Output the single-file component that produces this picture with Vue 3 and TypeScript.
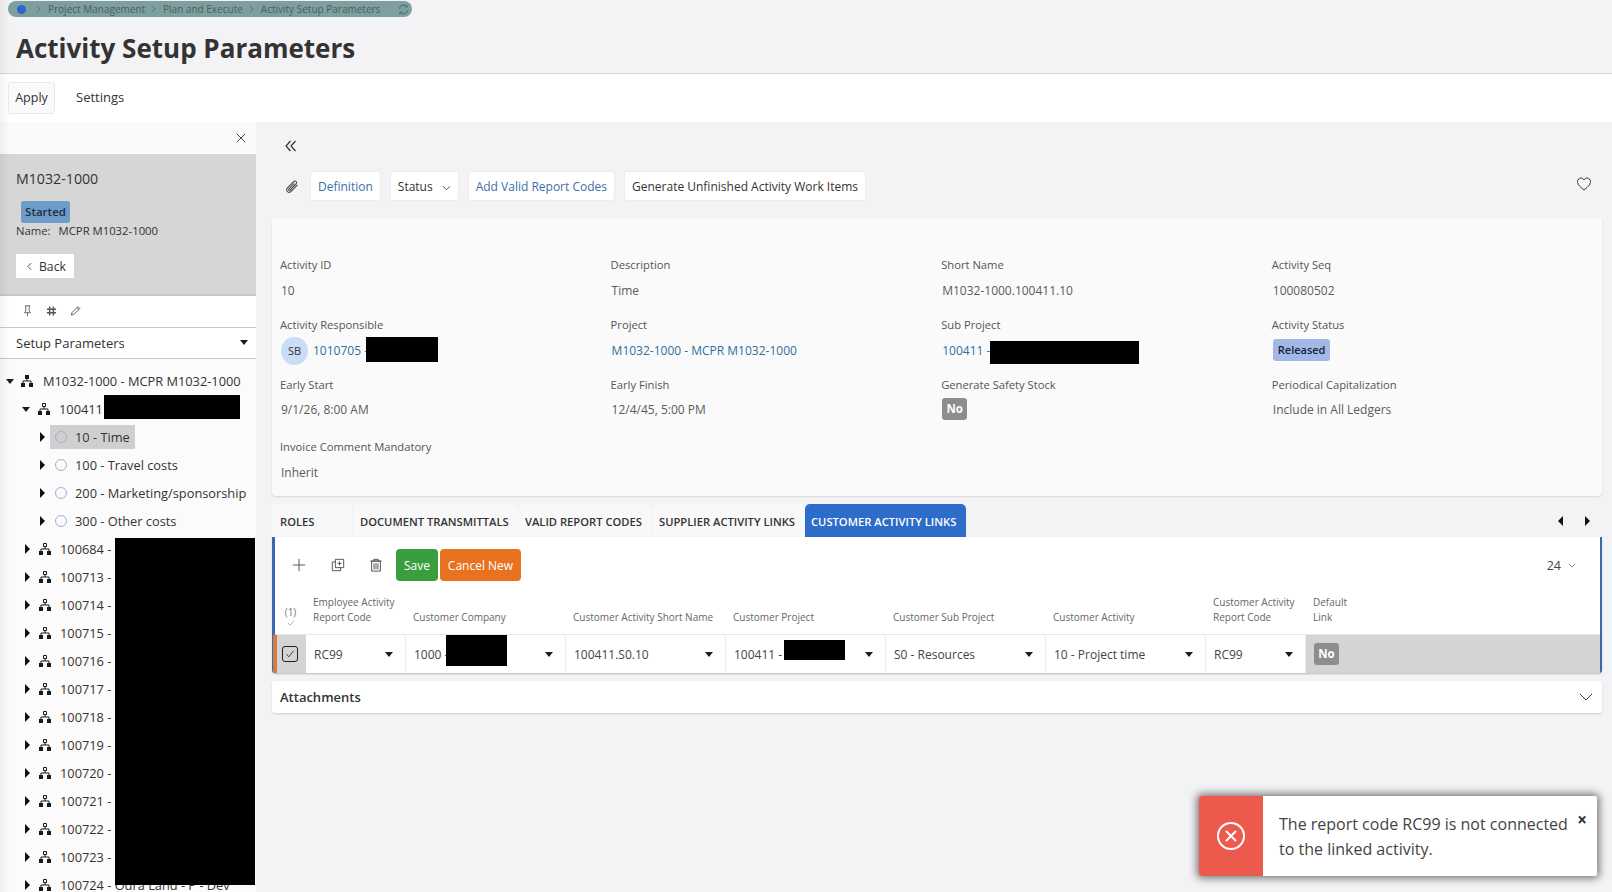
<script setup lang="ts">
interface Field { label: string; value?: string; kind?: string; redact?: number; }
const fields: Field[] = [
  { label: 'Activity ID', value: '10' },
  { label: 'Description', value: 'Time' },
  { label: 'Short Name', value: 'M1032-1000.100411.10' },
  { label: 'Activity Seq', value: '100080502' },
  { label: 'Activity Responsible', value: '1010705 -', kind: 'person' },
  { label: 'Project', value: 'M1032-1000 - MCPR M1032-1000', kind: 'link' },
  { label: 'Sub Project', value: '100411 -', kind: 'sub' },
  { label: 'Activity Status', value: 'Released', kind: 'released' },
  { label: 'Early Start', value: '9/1/26, 8:00 AM' },
  { label: 'Early Finish', value: '12/4/45, 5:00 PM' },
  { label: 'Generate Safety Stock', value: 'No', kind: 'no' },
  { label: 'Periodical Capitalization', value: 'Include in All Ledgers' },
  { label: 'Invoice Comment Mandatory', value: 'Inherit' },
];
const subRows = ['10 - Time', '100 - Travel costs', '200 - Marketing/sponsorship', '300 - Other costs'];
const projects = ['100684 -', '100713 -', '100714 -', '100715 -', '100716 -', '100717 -', '100718 -', '100719 -', '100720 -', '100721 -', '100722 -', '100723 -', '100724 - Oura Land - P - Dev'];
const tabs = [
  { t: 'ROLES', w: 80 }, { t: 'DOCUMENT TRANSMITTALS', w: 164 }, { t: 'VALID REPORT CODES', w: 133 },
  { t: 'SUPPLIER ACTIVITY LINKS', w: 152 }, { t: 'CUSTOMER ACTIVITY LINKS', w: 161, active: true },
];
const headers = [
  ['Employee Activity', 'Report Code'], ['Customer Company'], ['Customer Activity Short Name'], ['Customer Project'],
  ['Customer Sub Project'], ['Customer Activity'], ['Customer Activity', 'Report Code'], ['Default', 'Link'],
];
const cells = [
  { v: 'RC99' }, { v: '1000 -', r: 'r-company' }, { v: '100411.S0.10' }, { v: '100411 -', r: 'r-project' },
  { v: 'S0 - Resources' }, { v: '10 - Project time' }, { v: 'RC99' },
];
</script>

<template>
  <div class="page">
    <header class="head">
      <nav class="crumbs">
        <span class="dot"></span>
        <svg class="chev" viewBox="0 0 6 10"><path d="M1 1l4 4-4 4" /></svg>
        <span>Project Management</span>
        <svg class="chev" viewBox="0 0 6 10"><path d="M1 1l4 4-4 4" /></svg>
        <span>Plan and Execute</span>
        <svg class="chev" viewBox="0 0 6 10"><path d="M1 1l4 4-4 4" /></svg>
        <span>Activity Setup Parameters</span>
        <svg class="refresh" viewBox="0 0 12 12"><path d="M1.500 5A4.600 4.600 0 0 1 9.700 3M10.500 7A4.600 4.600 0 0 1 2.300 9M8 3.200h2V1.200M4 8.800H2v2" /></svg>
      </nav>
      <h1>Activity Setup Parameters</h1>
    </header>
    <div class="cmdbar">
      <button class="apply">Apply</button>
      <span class="settings">Settings</span>
    </div>

    <div class="body">
      <aside class="side">
        <div class="closerow">
          <svg class="x" viewBox="0 0 12 12"><path d="M1 1l10 10M11 1L1 11" /></svg>
        </div>
        <div class="summary">
          <div class="sumtitle">M1032-1000</div>
          <span class="started">Started</span>
          <div class="name"><span>Name:</span><span>MCPR M1032-1000</span></div>
          <button class="back">
            <svg viewBox="0 0 6 10"><path d="M5 1L1 5l4 4" /></svg>Back
          </button>
        </div>
        <div class="sidetools">
          <svg viewBox="0 0 12 14"><path d="M3 1h6M4 1v6L2.500 9h7L8 7V1M6 9v4" /></svg>
          <svg viewBox="0 0 12 12"><path d="M4 1v10M8 1v10M1 4h10M1 8h10" stroke-width="1.600" /></svg>
          <svg viewBox="0 0 12 12"><path d="M1.500 10.500l.7-2.700L8.700 1.300l2 2-6.500 6.500zM7.700 2.300l2 2" /></svg>
        </div>
        <div class="selectrow">
          <span>Setup Parameters</span><i class="caret"></i>
        </div>
        <div class="tree">
          <div class="row l0">
            <i class="caret tw"></i>
            <svg class="hier" viewBox="0 0 12 12"><path class="solid" d="M4 0h4v4H4zM0 8h4v4H0zM8 8h4v4H8z" /><path d="M6 4v2M2 8V6h8v2" /></svg>
            <span>M1032-1000 - MCPR M1032-1000</span>
          </div>
          <div class="row l1">
            <i class="caret tw"></i>
            <svg class="hier" viewBox="0 0 12 12"><path d="M4.500.5h3v3h-3z" /><path class="solid" d="M0 8h4v4H0zM8 8h4v4H8z" /><path d="M6 4v2M2 8V6h8v2" /></svg>
            <span>100411</span>
          </div>
          <div v-for="(s, i) in subRows" :key="s" class="row l2">
            <i class="caret tr"></i>
            <span class="leaf" :class="{ sel: i === 0 }"><i class="circle"></i><span>{{ s }}</span></span>
          </div>
          <div v-for="p in projects" :key="p" class="row l1">
            <i class="caret tr"></i>
            <svg class="hier" viewBox="0 0 12 12"><path d="M4.500.5h3v3h-3z" /><path class="solid" d="M0 8h4v4H0zM8 8h4v4H8z" /><path d="M6 4v2M2 8V6h8v2" /></svg>
            <span>{{ p }}</span>
          </div>
          <div class="mask mask-a"></div>
          <div class="mask mask-b"></div>
        </div>
      </aside>

      <main class="main">
        <div class="collapse">
          <svg viewBox="0 0 12 12"><path d="M5.500 1L1 6l4.500 5M10.500 1L6 6l4.500 5" /></svg>
        </div>
        <div class="actions">
          <span class="clip">
            <svg viewBox="0 0 16 16"><path d="M13.500 6.500L7.700 12.600c-1 1-2.500 1-3.500.2-1-.9-1-2.400 0-3.500l5.800-6c.7-.7 1.700-.7 2.300-.1.700.7.700 1.700 0 2.400L6.700 11.400c-.4.400-.9.400-1.200.1-.3-.3-.3-.8.100-1.200l5-5.200" /></svg>
          </span>
          <button class="act link">Definition</button>
          <button class="act status">Status
            <svg class="down" viewBox="0 0 10 6"><path d="M1 1l4 4 4-4" /></svg>
          </button>
          <button class="act link">Add Valid Report Codes</button>
          <button class="act">Generate Unfinished Activity Work Items</button>
          <svg class="heart" viewBox="0 0 16 16"><path d="M8 14C3 10 1.500 8 1.500 5.500 1.500 3.500 3 2 4.800 2 6.200 2 7.300 2.800 8 4c.7-1.200 1.800-2 3.200-2 1.800 0 3.300 1.500 3.300 3.500C14.500 8 13 10 8 14z" /></svg>
        </div>

        <section class="card">
          <div v-for="f in fields" :key="f.label" class="field">
            <label>{{ f.label }}</label>
            <div class="val">
              <template v-if="f.kind === 'person'">
                <span class="avatar">SB</span><span class="lnk">{{ f.value }}</span><span class="block b-person"></span>
              </template>
              <template v-else-if="f.kind === 'sub'">
                <span class="lnk">{{ f.value }}</span><span class="block b-sub"></span>
              </template>
              <span v-else-if="f.kind === 'link'" class="lnk">{{ f.value }}</span>
              <span v-else-if="f.kind === 'released'" class="released">{{ f.value }}</span>
              <span v-else-if="f.kind === 'no'" class="nobadge up">{{ f.value }}</span>
              <span v-else>{{ f.value }}</span>
            </div>
          </div>
        </section>

        <div class="tabs">
          <span v-for="t in tabs" :key="t.t" class="tab" :class="{ active: t.active }" :style="{ width: t.w + 'px' }">{{ t.t }}</span>
          <span class="tabnav">
            <i class="caret tl"></i><i class="caret tr"></i>
          </span>
        </div>
        <section class="panel">
          <div class="ptools">
            <svg class="ticon" viewBox="0 0 16 16"><path d="M8 1v14M1 8h14" /></svg>
            <svg class="ticon" viewBox="0 0 16 16"><path d="M5 1.500h9.500V11H5zM5 4.500H1.500V14.500H11V11M9.700 4v4.500M7.500 6.200H12" /></svg>
            <svg class="ticon" viewBox="0 0 16 16"><path d="M1.500 3.500h13M5.500 3.500V1.500h5v2M3 3.500h10V15H3zM5.800 6v7M8 6v7M10.200 6v7" /></svg>
            <button class="save">Save</button>
            <button class="cancel">Cancel New</button>
            <span class="pagesize">24
              <svg viewBox="0 0 10 6"><path d="M1 1l4 4 4-4" /></svg>
            </span>
          </div>
          <div class="grid thead">
            <div class="cnt"><span>(1)</span>
              <svg viewBox="0 0 10 8"><path d="M1 4l3 3 5-6" /></svg>
            </div>
            <div v-for="(h, i) in headers" :key="i" class="th">
              <span v-for="l in h" :key="l">{{ l }}</span>
            </div>
          </div>
          <div class="grid tbody">
            <div class="selcell">
              <span class="check"><svg viewBox="0 0 12 10"><path d="M1.500 5l3 3.500L10.500 1" /></svg></span>
            </div>
            <div v-for="(c, i) in cells" :key="i" class="td">
              <span>{{ c.v }}</span><i class="caret"></i>
              <span v-if="c.r" class="cellmask" :class="c.r"></span>
            </div>
            <div class="lastcell"><span class="nobadge">No</span></div>
          </div>
        </section>
        <section class="attach">
          <span>Attachments</span>
          <svg viewBox="0 0 14 8"><path d="M1 1l6 6 6-6" /></svg>
        </section>
      </main>
    </div>

    <div class="toast">
      <div class="toastside">
        <svg viewBox="0 0 30 30"><circle cx="15" cy="15" r="13" /><path d="M10 10l10 10M20 10L10 20" /></svg>
      </div>
      <div class="toastmsg">The report code RC99 is not connected to the linked activity.</div>
      <span class="toastx">×</span>
    </div>
    <div class="edge"></div>
  </div>
</template>

<style scoped>
.page {
  position: relative; width: 1612px; height: 892px; overflow: hidden; background: #f3f2f5;
  font-family: "Open Sans", "Liberation Sans", sans-serif; font-size: 13px; color: #333;
  display: flex; flex-direction: column;
}
button { font-family: inherit; cursor: default; }
svg { fill: none; stroke: currentColor; display: block; flex: none; }
i { display: block; flex: none; }
.edge { position: absolute; left: 0; top: 0; bottom: 0; width: 9px; background: linear-gradient(to right, rgba(0,0,0,.05), rgba(0,0,0,0)); pointer-events: none; }
.head { height: 74px; flex: none; box-sizing: border-box; padding: 1px 0 0 8px; border-bottom: 1px solid #d6d6d6; }
.crumbs {
  width: 404px; height: 16px; box-sizing: border-box; border-radius: 8px; background: #7d9f9f; color: #47615f;
  display: flex; align-items: center; padding-left: 9px; font-size: 10px; white-space: nowrap;
}
.dot { width: 9px; height: 9px; border-radius: 50%; background: #2d66cc; margin-right: 10px; }
.chev { width: 5px; height: 8px; stroke: #506c6a; margin-right: 7px; }
.crumbs span:not(.dot) { margin-right: 6px; }
.refresh { width: 11px; height: 11px; margin-left: 12px; stroke: #47615f; }
h1 { margin: 13px 0 0 8px; font-size: 26px; line-height: 36px; font-weight: 700; color: #333; }
.cmdbar { height: 48px; flex: none; background: #fff; display: flex; align-items: center; padding-left: 8px; font-size: 13px; }
.apply { width: 47px; height: 32px; padding: 0 0 2px; background: #fafafa; border: 1px solid #e8e8e8; border-radius: 3px; font-size: 12.500px; color: #333; }
.settings { margin: -2px 0 0 21px; }
.body { flex: 1; display: flex; min-height: 0; }

.side { width: 256px; flex: none; background: #fbfbfb; display: flex; flex-direction: column; overflow: hidden; }
.closerow { height: 32px; flex: none; background: #fafafa; display: flex; align-items: center; justify-content: flex-end; padding-right: 10px; }
.x { width: 10px; height: 10px; stroke: #222; }
.summary { height: 142px; flex: none; box-sizing: border-box; background: #d6d6d6; border-bottom: 2px solid #c6c6c6; padding: 15px 0 0 16px; }
.sumtitle { font-size: 14.200px; line-height: 20px; color: #333; }
.started { display: block; width: 49px; height: 22px; margin: 12px 0 0 5px; border-radius: 3px; background: #6d9cca; font-size: 11.500px; font-weight: 600; line-height: 22px; text-align: center; color: #1c2e40; }
.name { display: flex; gap: 8px; font-size: 11.300px; line-height: 16px; margin-top: 0; color: #333; }
.back { display: flex; align-items: center; gap: 7px; width: 58px; height: 24px; margin-top: 15px; padding: 0 0 0 11px; background: #fff; border: 0; font-size: 12.200px; color: #333; }
.back svg { width: 5px; height: 9px; stroke: #333; }
.sidetools { height: 31px; flex: none; box-sizing: content-box; background: #fff; display: flex; align-items: center; padding-left: 22px; gap: 13px; color: #555; border-bottom: 1px solid #c8c8c8; }
.sidetools svg { width: 11px; height: 12px; margin-top: -2px; }
.selectrow { height: 31px; flex: none; box-sizing: border-box; background: #fff; display: flex; align-items: center; justify-content: space-between; padding: 0 8px 1px 16px; font-size: 13px; border-bottom: 1px solid #c8c8c8; margin-bottom: 1px; }
.caret { width: 0; height: 0; border-left: 4.500px solid transparent; border-right: 4.500px solid transparent; border-top: 5px solid #1c1c1c; }
.caret.tr { border: 0; border-top: 5px solid transparent; border-bottom: 5px solid transparent; border-left: 5px solid #111; }
.caret.tl { border: 0; border-top: 5px solid transparent; border-bottom: 5px solid transparent; border-right: 5px solid #111; }
.tree { position: relative; padding-top: 7px; flex: 1; min-height: 0; }
.row { height: 28px; display: flex; align-items: center; white-space: nowrap; font-size: 12.800px; color: #333; }
.l0 { padding-left: 6px; }
.l1 { padding-left: 22px; }
.l2 { padding-left: 40px; }
.l0 .caret.tw { margin-right: 7px; }
.l1 .caret.tw { margin-right: 8px; }
.l1 .caret.tr { margin: 0 9px 0 3px; }
.l2 .caret.tr { margin-right: 5px; }
.hier { width: 12px; height: 12px; margin-right: 9px; color: #1a1a1a; }
.l0 .hier { margin-right: 10px; }
.hier .solid { fill: #1a1a1a; stroke: none; }
.leaf { height: 24px; display: flex; align-items: center; padding: 0 5px 0 5px; }
.leaf.sel { background: #cfcfcf; }
.circle { width: 10px; height: 10px; border-radius: 50%; border: 1px solid #9fb2d8; margin-right: 8px; }
.mask { position: absolute; background: #000; }
.mask-a { left: 104px; top: 35px; width: 136px; height: 24px; }
.mask-b { left: 115px; top: 178px; width: 140px; height: 347px; }

.main { flex: 1; min-width: 0; padding: 0 10px 0 16px; display: flex; flex-direction: column; }
.collapse { height: 49px; flex: none; box-sizing: border-box; display: flex; align-items: center; padding: 0 0 2px 13px; }
.collapse svg { width: 12px; height: 12px; stroke: #333; stroke-width: 1.200; }
.actions { height: 30px; flex: none; display: flex; align-items: center; gap: 9px; }
.clip { width: 30px; margin-right: -1px; display: flex; justify-content: flex-end; padding-right: 2px; box-sizing: border-box; }
.clip svg { width: 17px; height: 17px; stroke: #444; }
.act { height: 30px; padding: 0 7px; background: #fff; border: 1px solid #ececec; border-radius: 3px; font-size: 12px; color: #333; display: flex; align-items: center; gap: 8px; white-space: nowrap; }
.act.link { color: #3c6ea8; }
.act.status { gap: 9px; }
.down { width: 9px; height: 6px; stroke: #444; margin-top: 3px; }
.heart { width: 16px; height: 16px; margin: -4px 10px 0 auto; stroke: #333; }
.card {
  height: 278px; flex: none; margin-top: 17px; box-sizing: border-box; background: #fafafa; border-radius: 4px;
  box-shadow: 0 1px 2px rgba(0,0,0,.12); padding: 39px 8px 0;
  display: grid; grid-template-columns: repeat(4, 330.600px); grid-template-rows: 60px 60px 62px auto;
}
.field label { display: block; height: 16px; line-height: 16px; font-size: 11.200px; color: #555; }
.val { height: 35px; display: flex; align-items: center; padding-left: 1px; font-size: 12px; color: #5a5a5a; white-space: nowrap; }
.field:nth-child(n+9):nth-child(-n+12) .val { height: 33px; }
.lnk { color: #30709c; }
.avatar { width: 27px; height: 28px; border-radius: 50%; background: #c9ddf7; color: #333; display: flex; align-items: center; justify-content: center; font-size: 11px; margin-right: 5px; }
.block { background: #000; }
.b-person { width: 72px; height: 25px; margin: -2px 0 0 -2px; }
.b-sub { width: 149px; height: 23px; margin: 3px 0 0 0; }
.released { height: 22px; padding: 0 5px; line-height: 22px; border-radius: 3px; background: #a3b8e5; color: #14223d; font-size: 11px; font-weight: 600; margin-top: -1px; }
.nobadge { display: inline-block; width: 25px; height: 22px; line-height: 22px; text-align: center; border-radius: 3px; background: #8d8d8d; color: #fff; font-size: 11.500px; font-weight: 700; }
.nobadge.up { margin-top: -1px; }
.tabs { height: 33px; flex: none; margin-top: 8px; display: flex; align-items: stretch; gap: 1px; }
.tab { background: #f8f8f8; border-radius: 5px 5px 0 0; font-size: 11.200px; font-weight: 600; color: #333; display: flex; align-items: center; padding: 1px 0 0 7px; box-sizing: border-box; white-space: nowrap; }
.tab:first-child { padding-left: 8px; }
.tab.active { background: #2d6cc9; color: #fff; padding-left: 6px; }
.tabnav { margin-left: auto; display: flex; align-items: center; gap: 22px; padding-right: 12px; }
.panel { height: 136px; flex: none; box-sizing: border-box; background: #fff; border-left: 3px solid #3d68b0; border-right: 2px solid #3d68b0; border-radius: 0 0 3px 3px; box-shadow: 0 1px 2px rgba(0,0,0,.15); display: flex; flex-direction: column; }
.ptools { height: 54px; flex: none; display: flex; align-items: center; padding: 2px 0 0 17px; box-sizing: border-box; }
.ticon { width: 14px; height: 14px; stroke: #444; margin-right: 24px; }
.ticon:nth-child(1) { margin-right: 25px; }
.ticon:nth-child(2) { margin-right: 24px; }
.ticon:nth-child(3) { margin-right: 13px; }
.save, .cancel { height: 32px; border: 0; border-radius: 4px; color: #fff; font-size: 12px; font-weight: 500; padding: 0; }
.save { width: 42px; background: #3a9e3e; margin-right: 2px; }
.cancel { width: 81px; background: #e8721f; }
.pagesize { margin-left: auto; margin-right: 24px; display: flex; align-items: center; gap: 7px; font-size: 12.500px; color: #444; }
.pagesize svg { width: 8px; height: 5px; stroke: #666; }
.grid { display: grid; grid-template-columns: 31px 100px 160px 160px 160px 160px 160px 100px 1fr; flex: none; }
.thead { height: 43px; }
.cnt { display: flex; flex-direction: column; align-items: center; justify-content: flex-end; font-size: 10px; line-height: 14px; color: #777; padding-bottom: 8px; }
.cnt svg { width: 8px; height: 6px; stroke: #999; margin: 1px 0 0; }
.th { display: flex; flex-direction: column; justify-content: flex-end; padding: 0 0 9px 7px; font-size: 10px; line-height: 15px; color: #666; white-space: nowrap; }
.tbody { height: 39px; border-top: 1px solid #e8e8e8; box-sizing: border-box; box-shadow: 0 1px 2px rgba(0,0,0,.1); }
.selcell { margin-left: -2px; border-left: 4px solid #d97a40; background: #d4d4d4; display: flex; align-items: center; justify-content: center; padding-right: 3px; }
.check { width: 16px; height: 16px; box-sizing: border-box; border: 1.200px solid #222; border-radius: 3px; display: flex; align-items: center; justify-content: center; }
.check svg { width: 10px; height: 8px; stroke: #222; }
.td { position: relative; display: flex; align-items: center; justify-content: space-between; padding: 0 12px 0 8px; border-right: 1px solid #ececec; font-size: 12px; color: #444; white-space: nowrap; }
.lastcell { background: #d4d4d4; display: flex; align-items: center; padding-left: 8px; }
.cellmask { position: absolute; background: #000; }
.r-company { left: 40px; top: 0; width: 61px; height: 31px; }
.r-project { left: 58px; top: 5px; width: 61px; height: 20px; }
.attach { height: 32px; flex: none; margin-top: 8px; padding: 0 9px 0 8px; background: #fff; border-radius: 3px; box-shadow: 0 1px 2px rgba(0,0,0,.15); display: flex; align-items: center; justify-content: space-between; font-size: 13px; font-weight: 600; color: #333; }
.attach svg { width: 14px; height: 8px; stroke: #333; }

.toast { position: absolute; left: 1199px; top: 796px; width: 398px; height: 80px; background: #fff; border-radius: 2px; box-shadow: 0 0 9px 2px rgba(0,0,0,.55); display: flex; }
.toastside { width: 64px; flex: none; background: #ec5a4d; display: flex; align-items: center; justify-content: center; border-radius: 2px 0 0 2px; }
.toastside svg { width: 30px; height: 30px; stroke: #fff; stroke-width: 2; }
.toastmsg { width: 295px; margin: 16px 0 0 16px; font-size: 16px; line-height: 25px; color: #444; }
.toastx { position: absolute; right: 10px; top: 14px; font-size: 17px; line-height: 20px; font-weight: 700; color: #333; }
</style>
